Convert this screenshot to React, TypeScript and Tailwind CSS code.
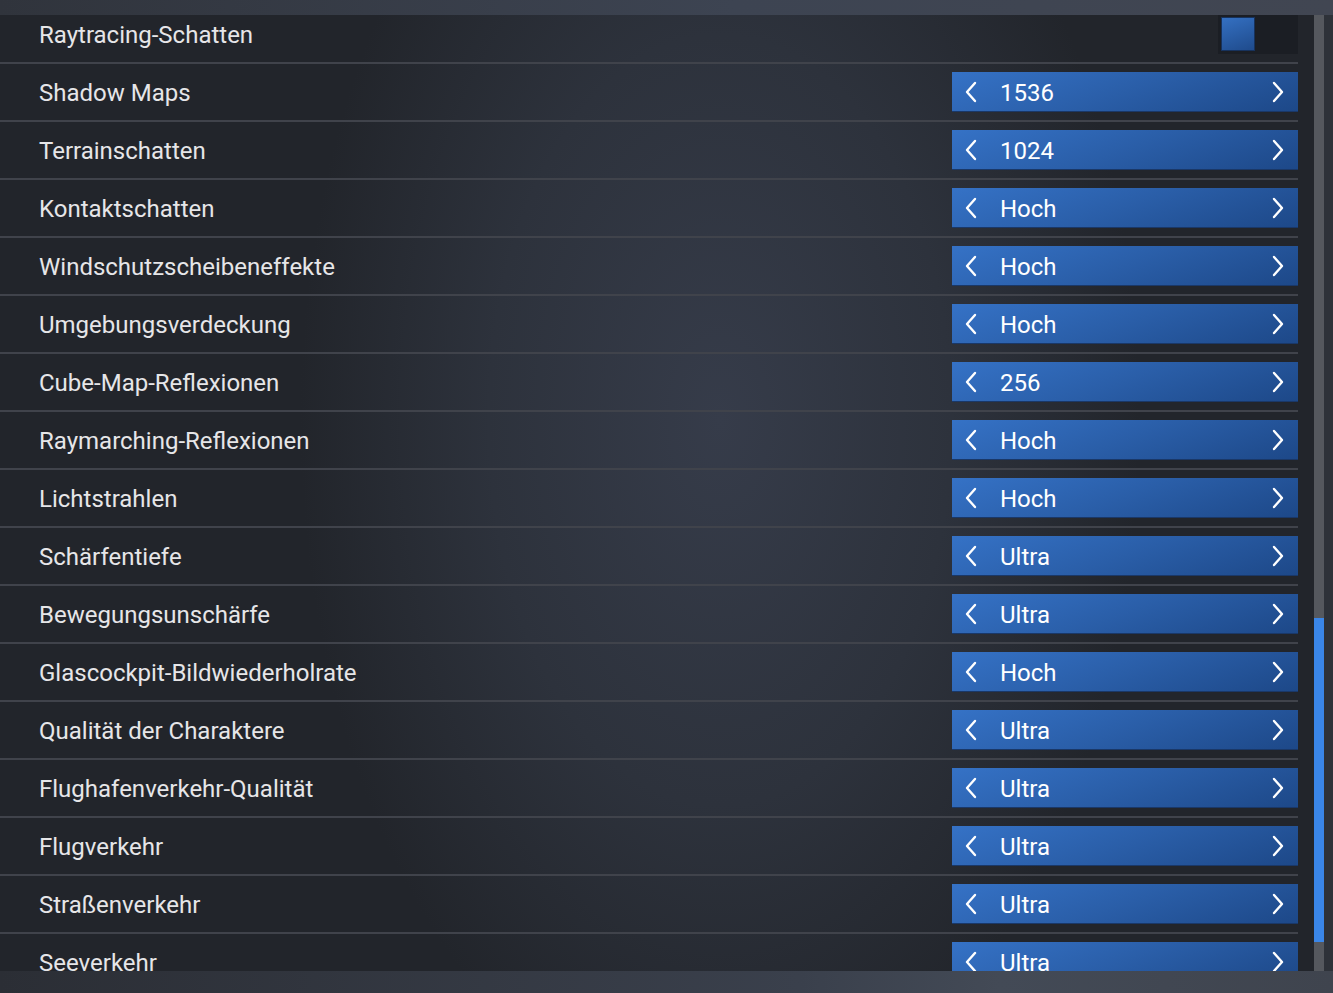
const rows: { label: string; value?: string }[] = [
  { label: "Raytracing-Schatten" },
  { label: "Shadow Maps", value: "1536" },
  { label: "Terrainschatten", value: "1024" },
  { label: "Kontaktschatten", value: "Hoch" },
  { label: "Windschutzscheibeneffekte", value: "Hoch" },
  { label: "Umgebungsverdeckung", value: "Hoch" },
  { label: "Cube-Map-Reflexionen", value: "256" },
  { label: "Raymarching-Reflexionen", value: "Hoch" },
  { label: "Lichtstrahlen", value: "Hoch" },
  { label: "Schärfentiefe", value: "Ultra" },
  { label: "Bewegungsunschärfe", value: "Ultra" },
  { label: "Glascockpit-Bildwiederholrate", value: "Hoch" },
  { label: "Qualität der Charaktere", value: "Ultra" },
  { label: "Flughafenverkehr-Qualität", value: "Ultra" },
  { label: "Flugverkehr", value: "Ultra" },
  { label: "Straßenverkehr", value: "Ultra" },
  { label: "Seeverkehr", value: "Ultra" },
];

const Chevron = ({ dir }: { dir: "left" | "right" }) => (
  <svg width="14" height="22" viewBox="0 0 14 22" fill="none">
    <path
      d={dir === "left" ? "M11 2L3 11L11 20" : "M3 2L11 11L3 20"}
      stroke="#ffffff"
      strokeWidth="2.4"
      strokeLinecap="round"
      strokeLinejoin="round"
    />
  </svg>
);

const Stepper = ({ value }: { value: string }) => (
  <div className="flex items-center w-[346px] h-10 pl-[12px] pr-[13px] bg-[linear-gradient(160deg,#3572c6_0%,#2a5ea8_50%,#1d4888_100%)] border-b border-[#1a3868]">
    <Chevron dir="left" />
    <span className="ml-[22px] pt-[2px] flex-1 text-[24px] leading-none text-white">{value}</span>
    <Chevron dir="right" />
  </div>
);

const Toggle = () => (
  <div className="w-20 h-10 bg-[#1b1e24] p-[3px] pr-0 flex">
    <div className="w-[34px] h-full bg-[linear-gradient(160deg,#3470c2,#1f4b8c)] border border-[#17325c]"></div>
  </div>
);

export default function App() {
  return (
    <div
      className="w-full h-[993px] overflow-hidden flex flex-col bg-[radial-gradient(ellipse_420px_700px_at_720px_420px,#363c4a_0%,#2d323c_55%,#22252b_100%)]"
      style={{ fontFamily: "Roboto, 'Noto Sans', sans-serif" }}
    >
      <div className="h-[15px] shrink-0 bg-[linear-gradient(90deg,#30343c_0%,#3d4452_55%,#414652_100%)]"></div>
      <div className="flex-1 min-h-0 flex">
        <div className="w-[1298px] overflow-hidden">
          <div className="-mt-[9px]">
            {rows.map((r) => (
              <div key={r.label} className="h-[58px] flex items-center justify-between pl-[39px] border-b-2 border-[#40434b]">
                <span className="pt-[2px] text-[24px] text-[#e6e6e8] leading-none">{r.label}</span>
                {r.value ? <Stepper value={r.value} /> : <Toggle />}
              </div>
            ))}
          </div>
        </div>
        <div className="ml-4 w-[10px] bg-[#55585e] flex flex-col">
          <div className="h-[603px]"></div>
          <div className="h-[324px] bg-[#3a86e8]"></div>
        </div>
        <div className="flex-1 bg-[#2e3239]"></div>
      </div>
      <div className="h-[22px] shrink-0 bg-[linear-gradient(90deg,#2b2e35_0%,#3a404c_60%,#434a56_75%,#3f444e_100%)]"></div>
    </div>
  );
}
